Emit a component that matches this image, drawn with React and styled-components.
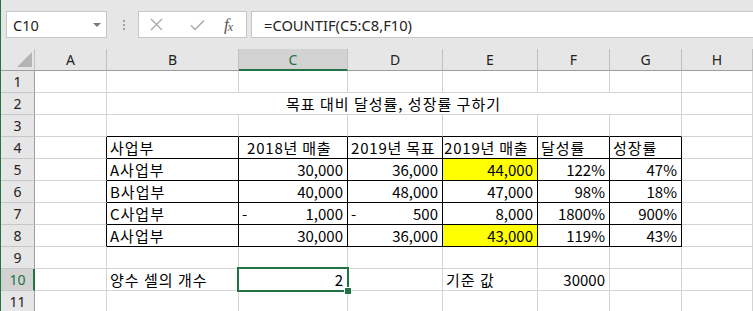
import React from "react";
import styled, { createGlobalStyle, css } from "styled-components";

const GlobalStyle = createGlobalStyle`
  html, body { margin: 0; padding: 0; background: #ffffff; overflow: hidden; }
  * { box-sizing: border-box; }
`;

const GREEN = "#217346";
const GRID = "#d4d4d4";
const HEAD_BG = "#e6e6e6";
const SEL_HEAD_BG = "#d2d2d2";
const CELL_FONT = `"Noto Sans CJK KR", "Noto Sans", sans-serif`;
const UI_FONT = `"Noto Sans", "Liberation Sans", sans-serif`;

const Window = styled.div`
  width: 753px;
  height: 311px;
  border-left: 1px solid ${GREEN};
  background: #fff;
  overflow: hidden;
`;

const TopBar = styled.div`
  height: 49px;
  background: ${HEAD_BG};
  display: flex;
  align-items: flex-start;
  padding: 11px 0 0 5px;
`;

const NameBox = styled.div`
  width: 101px;
  height: 27px;
  background: #fff;
  border: 1px solid #c6c6c6;
  display: flex;
  align-items: center;
  justify-content: space-between;
  padding: 0 5px 0 6px;
  font-family: ${UI_FONT};
  font-size: 14.5px;
  color: #222;
`;

const Caret = styled.span`
  width: 0;
  height: 0;
  border-left: 4px solid transparent;
  border-right: 4px solid transparent;
  border-top: 4px solid #7a7a7a;
  margin-top: 1px;
`;

const Dots = styled.div`
  width: 31px;
  height: 27px;
  display: flex;
  flex-direction: column;
  align-items: center;
  justify-content: center;
  gap: 2px;
  padding-left: 2px;
  & > span {
    width: 2px;
    height: 2px;
    background: #a0a0a0;
  }
`;

const IconBox = styled.div`
  width: 109px;
  height: 27px;
  background: #fff;
  border: 1px solid #c6c6c6;
  display: flex;
  align-items: center;
  padding: 0 0 0 11px;
`;

const IconSlot = styled.span`
  width: ${(p) => p.$w}px;
  display: flex;
  align-items: center;
`;

const Fx = styled.span`
  font-family: "Liberation Serif", serif;
  font-style: italic;
  font-size: 17px;
  color: #555;
  letter-spacing: -1px;
  & > sub {
    font-size: 12px;
    vertical-align: 0;
    position: relative;
    top: 1px;
  }
`;

const FormulaBox = styled.div`
  flex: 1;
  margin-left: 4px;
  height: 27px;
  background: #fff;
  border: 1px solid #c6c6c6;
  border-right: none;
  display: flex;
  align-items: center;
  padding-left: 12px;
  font-family: ${UI_FONT};
  font-size: 14.7px;
  color: #222;
`;

const Sheet = styled.div`
  display: grid;
  grid-template-columns: 34px 72px 132px 109px 95px 95px 72px 72px 1fr;
  grid-auto-rows: 22px;
`;

const Corner = styled.div`
  background: ${HEAD_BG};
  border-right: 1px solid #c0c0c0;
  border-bottom: 1px solid #9e9e9e;
  display: flex;
  align-items: flex-end;
  justify-content: flex-end;
  padding: 0 2px 3px 0;
`;

const ColHead = styled.div`
  background: ${(p) => (p.$sel ? SEL_HEAD_BG : HEAD_BG)};
  border-right: 1px solid #c0c0c0;
  border-bottom: ${(p) => (p.$sel ? `2px solid ${GREEN}` : "1px solid #9e9e9e")};
  display: flex;
  align-items: center;
  justify-content: center;
  font-family: ${UI_FONT};
  font-size: 14px;
  color: ${(p) => (p.$sel ? GREEN : "#222")};
  padding-top: ${(p) => (p.$sel ? "1px" : "0")};
`;

const RowHead = styled.div`
  background: ${(p) => (p.$sel ? SEL_HEAD_BG : HEAD_BG)};
  border-right: ${(p) => (p.$sel ? `2px solid ${GREEN}` : "1px solid #9e9e9e")};
  border-bottom: 1px solid #c6c6c6;
  display: flex;
  align-items: center;
  justify-content: center;
  font-family: ${UI_FONT};
  font-size: 14px;
  color: ${(p) => (p.$sel ? GREEN : "#222")};
  padding-left: ${(p) => (p.$sel ? "1px" : "0")};
`;

const Cell = styled.div`
  position: relative;
  background: ${(p) => p.$bg || "#fff"};
  border-right: 1px solid ${(p) => (p.$rb ? "#000" : GRID)};
  border-bottom: 1px solid ${(p) => (p.$bb ? "#000" : GRID)};
  ${(p) => p.$span && css`grid-column: span ${p.$span};`}
  display: flex;
  align-items: flex-start;
  justify-content: ${(p) =>
    p.$align === "right"
      ? "flex-end"
      : p.$align === "center"
      ? "center"
      : p.$align === "split"
      ? "space-between"
      : "flex-start"};
  padding: 0 4px 0 ${(p) => 3 + (p.$indent || 0)}px;
  font-family: ${CELL_FONT};
  font-size: 15px;
  line-height: 21px;
  letter-spacing: ${(p) => p.$ls || 0}px;
  color: #000;
  white-space: nowrap;
`;

const Selection = styled.div`
  position: absolute;
  z-index: 2;
  left: -2px;
  top: -2px;
  width: 112px;
  height: 25px;
  border: 2px solid ${GREEN};
  pointer-events: none;
`;

const Handle = styled.div`
  position: absolute;
  right: -4px;
  bottom: -4px;
  width: 7px;
  height: 7px;
  background: ${GREEN};
  border-left: 1px solid #fff;
  border-top: 1px solid #fff;
`;

const COLS = ["A", "B", "C", "D", "E", "F", "G", "H"];

const Y = "#ffff00";

const t = (v, align, extra = {}) => ({ v, align, ...extra });
const ko = (v, align) => ({ v, align, ls: 1 });
const hd = (v, extra = {}) => ({ v, align: "left", ls: 0.8, ...extra });

const tableRows = {
  4: [null, ko("사업부"), hd("2018년 매출", { indent: 5 }), hd("2019년 목표"), hd("2019년 매출", { indent: -2 }), ko("달성률"), ko("성장률"), null],
  5: [null, ko("A사업부"), t("30,000", "right"), t("36,000", "right"), t("44,000", "right", { bg: Y }), t("122%", "right"), t("47%", "right"), null],
  6: [null, ko("B사업부"), t("40,000", "right"), t("48,000", "right"), t("47,000", "right"), t("98%", "right"), t("18%", "right"), null],
  7: [null, ko("C사업부"), t(["-", "1,000"], "split"), t(["-", "500"], "split"), t("8,000", "right"), t("1800%", "right"), t("900%", "right"), null],
  8: [null, ko("A사업부"), t("30,000", "right"), t("36,000", "right"), t("43,000", "right", { bg: Y }), t("119%", "right"), t("43%", "right"), null],
};

function buildRow(n) {
  if (n === 2) {
    return [
      { key: "A" },
      { key: "B", span: 6, align: "center", ls: 1, v: "목표 대비 달성률, 성장률 구하기" },
      { key: "H" },
    ];
  }
  const spec = tableRows[n];
  return COLS.map((c, i) => {
    let cell = { key: c };
    if (spec && spec[i]) cell = { ...cell, ...spec[i] };
    if (n >= 4 && n <= 8) {
      if (i >= 1 && i <= 6) {
        cell.rb = true;
        cell.bb = true;
      }
      if (i === 0) cell.rb = true;
    }
    if (n === 3 && i >= 1 && i <= 6) cell.bb = true;
    if (n === 10) {
      if (c === "B") Object.assign(cell, ko("양수 셀의 개수"));
      if (c === "C") Object.assign(cell, { v: "2", align: "right", sel: true });
      if (c === "E") Object.assign(cell, ko("기준 값"));
      if (c === "F") Object.assign(cell, { v: "30000", align: "right" });
    }
    return cell;
  });
}

function SelectAllTriangle() {
  return (
    <svg width="15" height="15" viewBox="0 0 15 15">
      <polygon points="15,0 15,15 0,15" fill="#b4b4b4" />
    </svg>
  );
}

function XIcon() {
  return (
    <svg width="13" height="13" viewBox="0 0 13 13">
      <path d="M1 1 L12 12 M12 1 L1 12" stroke="#a8a8a8" strokeWidth="1.3" fill="none" />
    </svg>
  );
}

function CheckIcon() {
  return (
    <svg width="15" height="12" viewBox="0 0 15 12">
      <path d="M1 6.5 L5 10.5 L14 1.5" stroke="#a8a8a8" strokeWidth="1.5" fill="none" />
    </svg>
  );
}

export default function App() {
  const rows = Array.from({ length: 11 }, (_, i) => i + 1);
  return (
    <>
      <GlobalStyle />
      <Window>
        <TopBar>
          <NameBox>
            <span>C10</span>
            <Caret />
          </NameBox>
          <Dots>
            <span />
            <span />
            <span />
          </Dots>
          <IconBox>
            <IconSlot $w={40}>
              <XIcon />
            </IconSlot>
            <IconSlot $w={34}>
              <CheckIcon />
            </IconSlot>
            <IconSlot $w={20}>
              <Fx>
                f<sub>x</sub>
              </Fx>
            </IconSlot>
          </IconBox>
          <FormulaBox>=COUNTIF(C5:C8,F10)</FormulaBox>
        </TopBar>
        <Sheet>
          <Corner>
            <SelectAllTriangle />
          </Corner>
          {COLS.map((c) => (
            <ColHead key={c} $sel={c === "C"}>
              {c}
            </ColHead>
          ))}
          {rows.map((n) => (
            <React.Fragment key={n}>
              <RowHead $sel={n === 10}>{n}</RowHead>
              {buildRow(n).map((cell) => (
                <Cell
                  key={cell.key}
                  $span={cell.span}
                  $align={cell.align}
                  $bg={cell.bg}
                  $rb={cell.rb}
                  $bb={cell.bb}
                  $ls={cell.ls}
                  $indent={cell.indent}
                >
                  {Array.isArray(cell.v) ? (
                    <>
                      <span>{cell.v[0]}</span>
                      <span>{cell.v[1]}</span>
                    </>
                  ) : (
                    cell.v
                  )}
                  {cell.sel && (
                    <Selection>
                      <Handle />
                    </Selection>
                  )}
                </Cell>
              ))}
            </React.Fragment>
          ))}
        </Sheet>
      </Window>
    </>
  );
}
